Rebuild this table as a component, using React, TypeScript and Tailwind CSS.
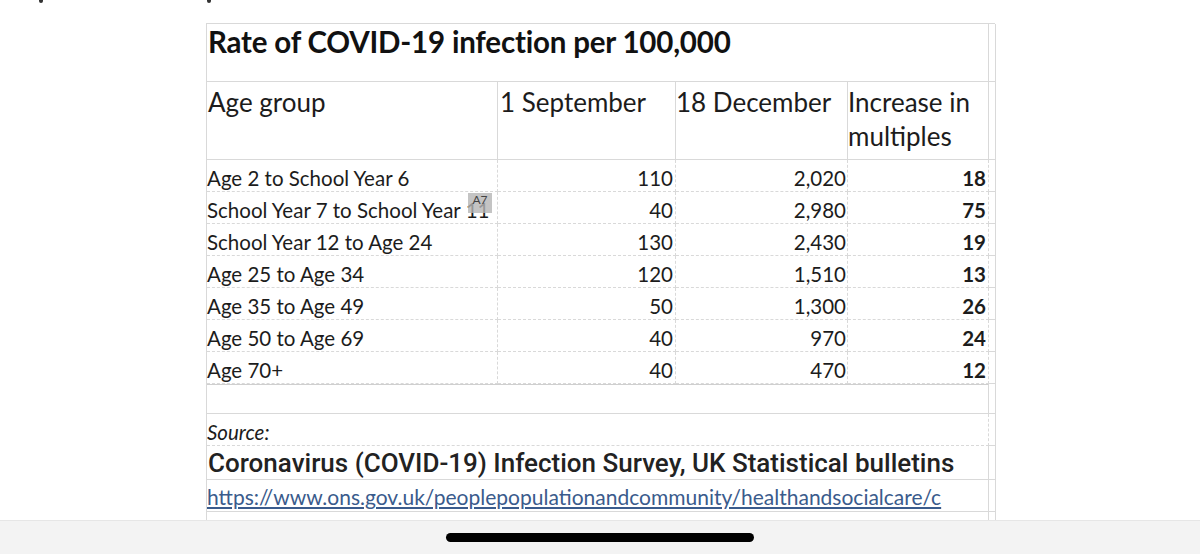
import React from "react";

const rows = [
  { group: "Age 2 to School Year 6", sep: "110", dec: "2,020", inc: "18" },
  { group: "School Year 7 to School Year 11", sep: "40", dec: "2,980", inc: "75", tag: true },
  { group: "School Year 12 to Age 24", sep: "130", dec: "2,430", inc: "19" },
  { group: "Age 25 to Age 34", sep: "120", dec: "1,510", inc: "13" },
  { group: "Age 35 to Age 49", sep: "50", dec: "1,300", inc: "26" },
  { group: "Age 50 to Age 69", sep: "40", dec: "970", inc: "24" },
  { group: "Age 70+", sep: "40", dec: "470", inc: "12" },
];

const sheet = { fontFamily: "Lato, 'Open Sans', sans-serif" };

function Cell({ children, className = "" }: { children?: React.ReactNode; className?: string }) {
  return <div className={`border-b border-r border-[#d9d9d9] ${className}`}>{children}</div>;
}

export default function App() {
  return (
    <div className="flex h-[554px] w-[1200px] flex-col overflow-hidden bg-white text-[#1c1c1c]">
      {/* clipped line above the sheet */}
      <div className="flex h-[24px] items-start">
        <span className="ml-[39px] h-[3px] w-[4px] rounded-b bg-[#333]" />
        <span className="ml-[164px] h-[3px] w-[4px] rounded-b bg-[#333]" />
      </div>

      <div
        className="ml-[206px] grid w-[789px] grid-cols-[291px_178px_172px_141px_7px] border-l border-t border-[#d9d9d9]"
        style={sheet}
      >
        {/* title */}
        <Cell className="col-span-4 h-[58px] pl-[1px] text-[29.5px] font-bold leading-[36px] tracking-[-0.2px] text-[#111]">
          Rate of COVID-19 infection per 100,000
        </Cell>
        <Cell className="h-[58px]" />

        {/* header */}
        <Cell className="h-[78px] pl-[1px] pt-[3px] text-[26px] leading-[34px]">Age group</Cell>
        <Cell className="h-[78px] pl-[2px] pt-[3px] text-[26px] leading-[34px]">1 September</Cell>
        <Cell className="h-[78px] pt-[3px] text-[26px] leading-[34px]">18 December</Cell>
        <Cell className="h-[78px] pt-[3px] text-[26px] leading-[34px]">
          Increase in
          <br />
          multiples
        </Cell>
        <Cell className="h-[78px]" />

        {/* data */}
        {rows.map((r) => (
          <React.Fragment key={r.group}>
            <Cell className="relative h-[32px] border-dashed pt-[4px] text-[20.5px] leading-[28px]">
              {r.group}
              {r.tag && (
                <span className="absolute left-[261px] top-[1px] flex h-[20px] w-[24px] items-start justify-center bg-[#b5b5b5]/80 pt-[1px] text-[12px] leading-[12px] text-[#444]">
                  A7
                </span>
              )}
            </Cell>
            <Cell className="h-[32px] border-dashed pr-[2px] pt-[4px] text-right text-[20.5px] leading-[28px]">{r.sep}</Cell>
            <Cell className="h-[32px] border-dashed pr-[1px] pt-[4px] text-right text-[20.5px] leading-[28px]">{r.dec}</Cell>
            <Cell className="h-[32px] border-dashed pr-[2px] pt-[4px] text-right text-[20.5px] font-bold leading-[28px]">
              {r.inc}
            </Cell>
            <Cell className="h-[32px]" />
          </React.Fragment>
        ))}

        {/* blank */}
        <Cell className="col-span-4 h-[30px] border-t border-t-[#cfcfcf]" />
        <Cell className="h-[30px]" />

        {/* source */}
        <Cell className="col-span-4 h-[32px] border-dashed pt-[6px] text-[20.5px] italic leading-[24px]">
          Source:
        </Cell>
        <Cell className="h-[32px]" />

        <Cell className="col-span-4 h-[34px] pl-[1px] text-[26px] font-medium leading-[32px] text-[#222]">
          <span style={{ fontFamily: "Roboto, 'Liberation Sans', sans-serif" }}>
            Coronavirus (COVID-19) Infection Survey, UK Statistical bulletins
          </span>
        </Cell>
        <Cell className="h-[34px]" />

        <Cell className="col-span-4 h-[32px] text-[21px] leading-[33px] text-[#3a5b8c] underline underline-offset-2">
          https://www.ons.gov.uk/peoplepopulationandcommunity/healthandsocialcare/c
        </Cell>
        <Cell className="h-[32px]" />

        <div className="col-span-4 h-[8px] border-r border-[#d9d9d9]" />
        <div className="h-[8px] border-r border-[#d9d9d9]" />
      </div>

      {/* home indicator bar */}
      <div className="flex h-[34px] shrink-0 justify-center border-t border-[#e6e6e6] bg-[#f3f3f3] pt-[12px]">
        <div className="h-[9px] w-[308px] rounded-full bg-black" />
      </div>
    </div>
  );
}
